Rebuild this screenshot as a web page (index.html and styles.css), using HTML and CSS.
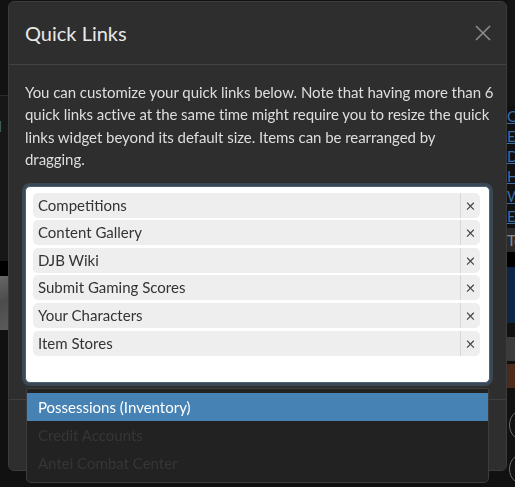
FILE: index.html
```html
<!DOCTYPE html>
<html lang="en">
<head>
<meta charset="utf-8">
<title>Quick Links</title>
<link rel="stylesheet" href="styles.css">
</head>
<body>
<div class="page">
  <aside class="side side-left">
    <div class="side-top"></div>
    <div class="side-news"><span class="side-link">Journal</span></div>
    <div class="side-gap"></div>
    <div class="side-photo"></div>
  </aside>
  <main class="main">
    <div class="main-fill"></div>
    <p class="main-text">Whoops your results for the Czech Jedi Wiki</p>
  </main>
  <aside class="side side-right">
    <div class="side-top short"></div>
    <ul class="link-list">
      <li><a>Overview</a></li>
      <li><a>Events</a></li>
      <li><a>Documents</a></li>
      <li><a>History</a></li>
      <li><a>Wiki</a></li>
      <li><a>Elections</a></li>
    </ul>
    <div class="side-band">Top</div>
    <div class="side-gap"></div>
    <div class="side-banner"></div>
    <div class="thumbs">
      <div class="thumb thumb-grey"></div>
      <div class="thumb thumb-brown"></div>
    </div>
    <div class="rings">
      <span class="ring"></span>
      <span class="ring"></span>
    </div>
  </aside>
</div>

<div class="modal" role="dialog" aria-labelledby="ql-title">
  <header class="modal-header">
    <h2 class="modal-title" id="ql-title">Quick Links</h2>
    <button class="modal-close" type="button" aria-label="Close">
      <svg width="16" height="16" viewBox="0 0 16 16" aria-hidden="true">
        <path d="M1 1 L15 15 M15 1 L1 15" stroke="currentColor" stroke-width="1.6" fill="none"/>
      </svg>
    </button>
  </header>
  <div class="modal-body">
    <p class="intro">You can customize your quick links below. Note that having more than 6 quick links active at the same time might require you to resize the quick links widget beyond its default size. Items can be rearranged by dragging.</p>
    <div class="select">
      <ul class="tags">
        <li class="tag"><span class="tag-label">Competitions</span><span class="tag-remove">×</span></li>
        <li class="tag"><span class="tag-label">Content Gallery</span><span class="tag-remove">×</span></li>
        <li class="tag"><span class="tag-label">DJB Wiki</span><span class="tag-remove">×</span></li>
        <li class="tag"><span class="tag-label">Submit Gaming Scores</span><span class="tag-remove">×</span></li>
        <li class="tag"><span class="tag-label">Your Characters</span><span class="tag-remove">×</span></li>
        <li class="tag"><span class="tag-label">Item Stores</span><span class="tag-remove">×</span></li>
      </ul>
      <div class="select-input"></div>
      <ul class="dropdown">
        <li class="option active">Possessions (Inventory)</li>
        <li class="option disabled">Credit Accounts</li>
        <li class="option disabled">Antei Combat Center</li>
      </ul>
    </div>
  </div>
  <footer class="modal-footer"></footer>
</div>
</body>
</html>
```

FILE: styles.css
```css
* {
  box-sizing: border-box;
}

html,
body {
  margin: 0;
  height: 100%;
  overflow: hidden;
  background: #111;
  font-family: Lato, "Open Sans", Arial, sans-serif;
}

/* ---------- page behind the dialog ---------- */
.page {
  display: grid;
  grid-template-columns: 60px 1fr 80px;
  width: 639px;
  margin-left: -52px;
  height: 487px;
}

.side {
  display: flex;
  flex-direction: column;
}

.side-top {
  height: 96px;
  background: #121212;
  border-bottom: 1px solid #2b2b2b;
}

.side-top.short {
  height: 106px;
  border-bottom: 0;
  background: #141414;
}

.side-news {
  height: 165px;
  background: #171717;
  padding-top: 20px;
  padding-left: 6px;
}

.side-link {
  color: #3f74a6;
  font-size: 15px;
}

.side-gap {
  height: 15px;
  background: #000;
}

.side-photo {
  height: 54px;
  background: linear-gradient(160deg, #7a7a7a, #4c4c4c 60%, #5a5a5a);
}

.main {
  display: flex;
  flex-direction: column;
}

.main-fill {
  height: 484px;
}

.main-text {
  margin: 0 0 0 140px;
  color: #8f99a3;
  font-size: 15px;
  line-height: 18px;
  text-decoration: underline;
}

.link-list {
  list-style: none;
  margin: 0;
  padding: 0 0 2px 0;
}

.link-list li {
  height: 20px;
  line-height: 20px;
  font-size: 15px;
}

.link-list a {
  color: #3a6ea5;
  text-decoration: underline;
}

.side-band {
  height: 24px;
  line-height: 24px;
  background: #2b2b2b;
  color: #8a8a8a;
  font-size: 15px;
}

.side-banner {
  height: 56px;
  background: linear-gradient(90deg, #0d2546, #133463);
}

.thumbs {
  display: flex;
  flex-direction: column;
  gap: 3px;
  padding-top: 14px;
}

.thumb {
  height: 24px;
}

.thumb-grey {
  background: linear-gradient(90deg, #3a3a3a, #5a5a5a);
}

.thumb-brown {
  background: linear-gradient(90deg, #4a2a1c, #6b3d28);
}

.rings {
  display: flex;
  flex-direction: column;
  gap: 10px;
  padding: 20px 0 0 2px;
}

.ring {
  width: 34px;
  height: 34px;
  border-radius: 50%;
  border: 1px solid #6a6a6a;
}

/* ---------- dialog ---------- */
.modal {
  position: fixed;
  left: 8px;
  top: 1px;
  width: 499px;
  height: 470px;
  display: flex;
  flex-direction: column;
  background: #2e2e2e;
  border: 1px solid #3c3c3c;
  border-radius: 6px;
}

.modal-header {
  display: flex;
  align-items: center;
  justify-content: space-between;
  height: 63px;
  padding: 0 15px 0 16px;
  border-bottom: 1px solid #434343;
}

.modal-title {
  margin: 0;
  font-size: 20px;
  font-weight: 400;
  line-height: 24px;
  color: #e8e8e8;
}

.modal-close {
  display: flex;
  padding: 0;
  border: 0;
  background: none;
  color: #8c8c8c;
  cursor: pointer;
}

.modal-body {
  padding: 16px;
}

.intro {
  margin: 0 -6px 15px 0;
  font-size: 15px;
  line-height: 22.4px;
  letter-spacing: -0.05px;
  color: #dedede;
}

.select {
  position: relative;
  background: #fff;
  border: 1px solid #4d6277;
  border-radius: 5px;
  box-shadow: 0 0 0 3px #3a4855;
  padding: 6px 9px 0 7px;
}

.tags {
  list-style: none;
  margin: 0;
  padding: 0;
  display: flex;
  flex-direction: column;
  gap: 2.6px;
}

.tag {
  display: flex;
  align-items: stretch;
  height: 25px;
  background: #eee;
  border-radius: 5px;
  font-size: 15px;
  line-height: 25px;
  color: #333;
}

.tag-label {
  flex: 1;
  padding-left: 5px;
}

.tag-remove {
  width: 20px;
  text-align: center;
  border-left: 1px solid #d6d6d6;
  font-size: 17px;
  color: #444;
}

.select-input {
  height: 26px;
}

.dropdown {
  position: absolute;
  left: 0;
  right: 0;
  top: calc(100% + 6px);
  list-style: none;
  margin: 0;
  padding: 4px 0 5px;
  background: #222;
  border: 1px solid #3d3d3d;
  border-radius: 0 0 5px 5px;
}

.option {
  height: 28px;
  line-height: 28px;
  padding-left: 11px;
  font-size: 15px;
}

.option.active {
  background: #4682b4;
  color: #fff;
}

.option.disabled {
  color: #363636;
}

.modal-footer {
  flex: 1;
  border-top: 1px solid #3e3e3e;
}
```
